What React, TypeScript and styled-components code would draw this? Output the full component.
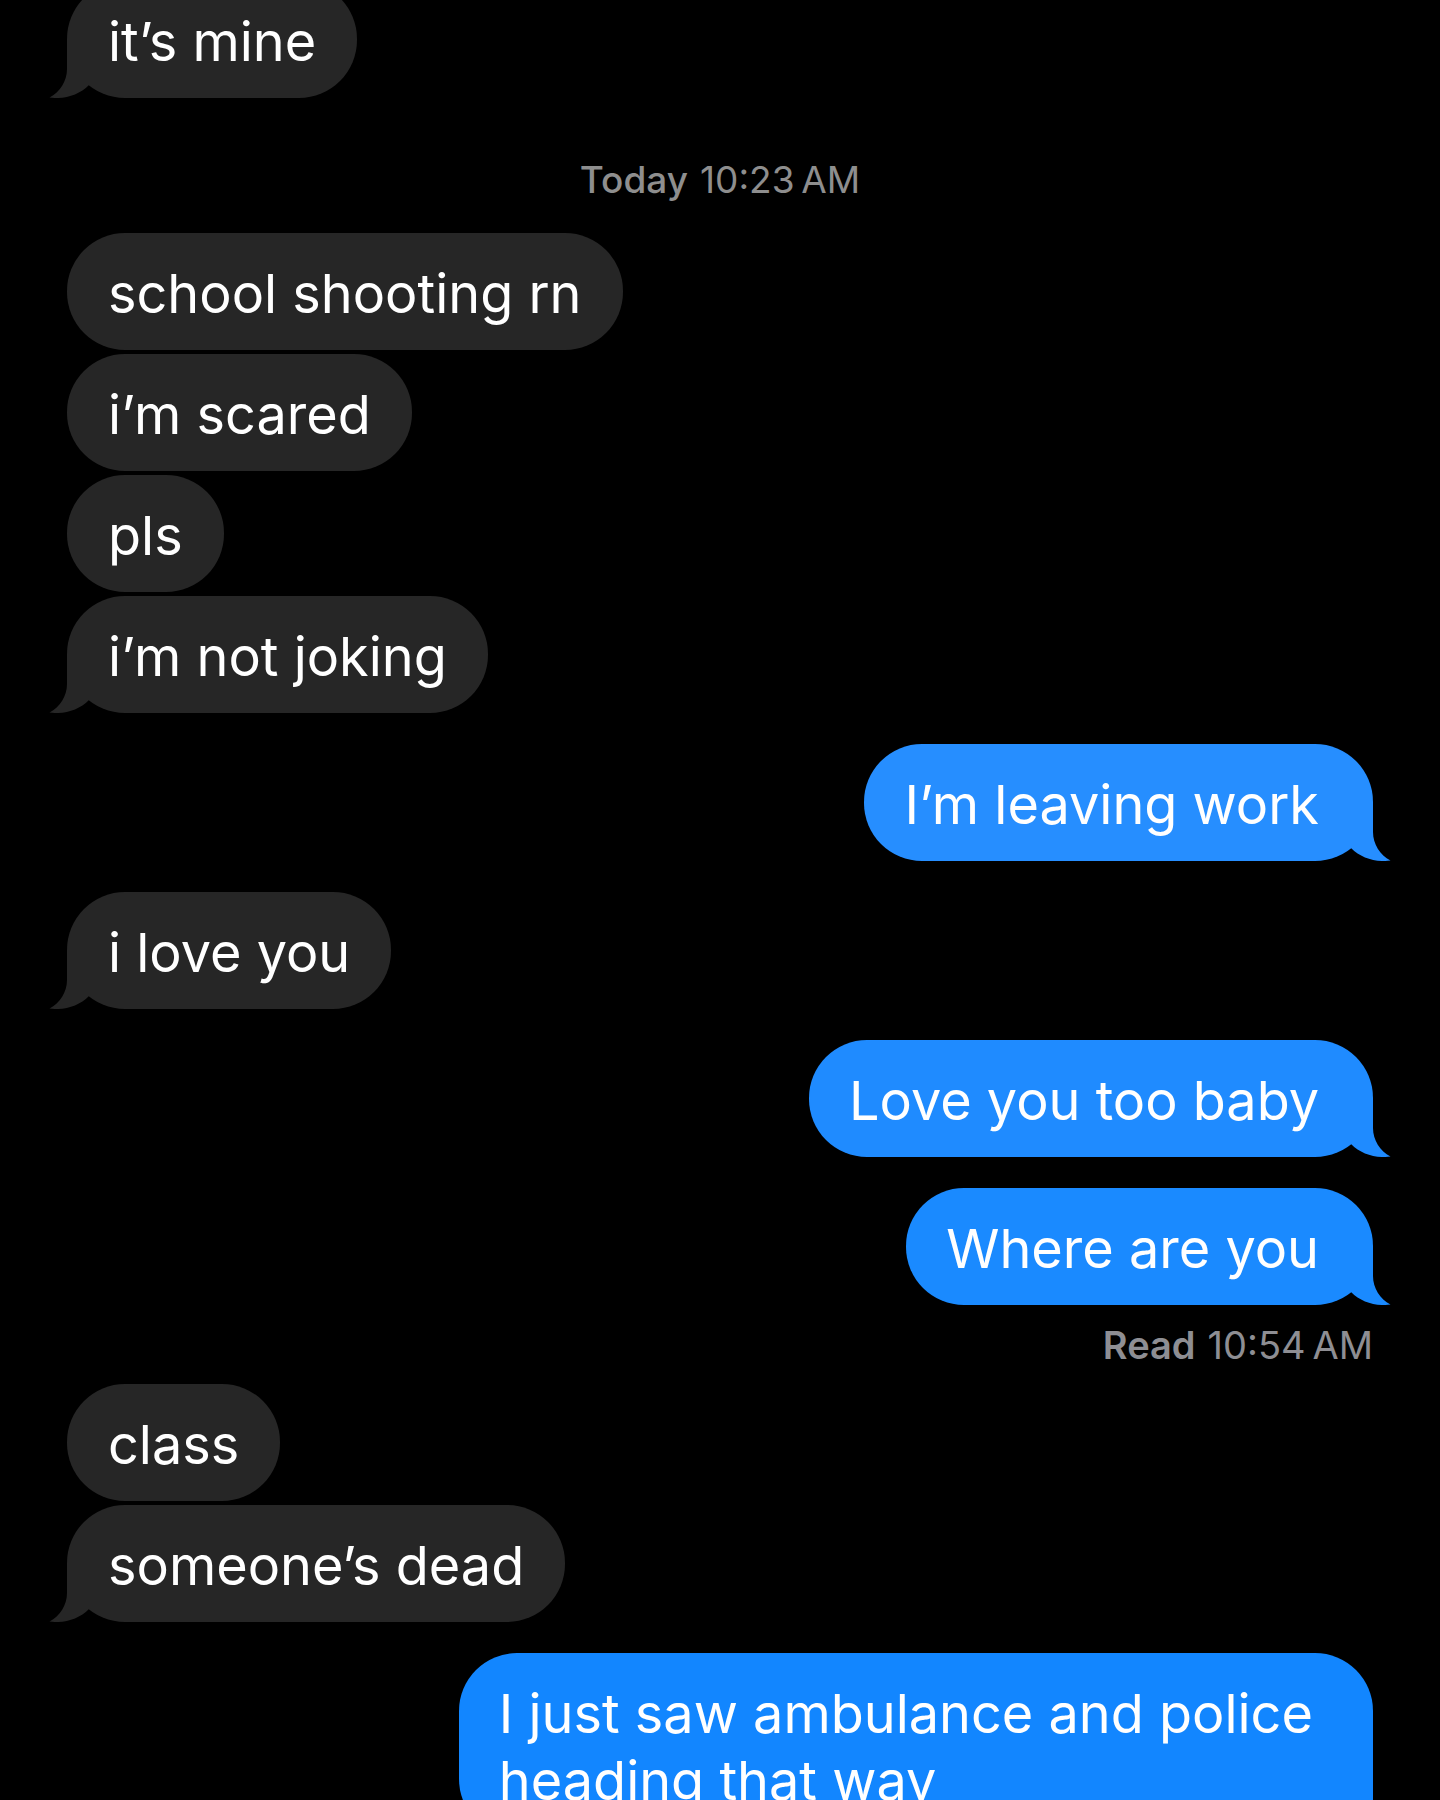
import React from "react";
import styled, { createGlobalStyle } from "styled-components";

type Side = "received" | "sent";

type Message = { text: string; tail?: boolean };

type Entry =
  | { kind: "messages"; side: Side; tint: string; items: Message[] }
  | { kind: "divider"; label: string; time: string }
  | { kind: "receipt"; label: string; time: string };

const GREY = "#262626";

const conversation: Entry[] = [
  { kind: "messages", side: "received", tint: GREY, items: [{ text: "it’s mine", tail: true }] },
  { kind: "divider", label: "Today", time: "10:23\u202fAM" },
  {
    kind: "messages",
    side: "received",
    tint: GREY,
    items: [
      { text: "school shooting rn" },
      { text: "i’m scared" },
      { text: "pls" },
      { text: "i’m not joking", tail: true },
    ],
  },
  { kind: "messages", side: "sent", tint: "#268eff", items: [{ text: "I’m leaving work", tail: true }] },
  { kind: "messages", side: "received", tint: GREY, items: [{ text: "i love you", tail: true }] },
  { kind: "messages", side: "sent", tint: "#1f8bff", items: [{ text: "Love you too baby", tail: true }] },
  { kind: "messages", side: "sent", tint: "#1a8aff", items: [{ text: "Where are you", tail: true }] },
  { kind: "receipt", label: "Read", time: "10:54\u202fAM" },
  {
    kind: "messages",
    side: "received",
    tint: GREY,
    items: [{ text: "class" }, { text: "someone’s dead", tail: true }],
  },
  {
    kind: "messages",
    side: "sent",
    tint: "#1286ff",
    items: [{ text: "I just saw ambulance and police heading that way", tail: true }],
  },
];

const GlobalStyle = createGlobalStyle`
  *, *::before, *::after {
    box-sizing: border-box;
  }

  body {
    margin: 0;
    background: #000;
    font-family: Inter, "Liberation Sans", sans-serif;
  }
`;

const Screen = styled.main`
  height: 100vh;
  overflow: hidden;
  background: #000;
`;

const Thread = styled.div`
  display: flex;
  flex-direction: column;
  margin-top: -19px;
  padding: 0 67px;
`;

const Group = styled.section<{ $side: Side }>`
  display: flex;
  flex-direction: column;
  align-items: ${({ $side }) => ($side === "sent" ? "flex-end" : "flex-start")};
  gap: 4px;

  & + & {
    margin-top: 31px;
  }
`;

const Bubble = styled.p<{ $side: Side; $tint: string }>`
  position: relative;
  max-width: 70%;
  margin: 0;
  padding: 27px ${({ $side }) => ($side === "sent" ? "54px 23px 40px" : "41px 23px 41px")};
  border-radius: 58px;
  background: ${({ $tint }) => $tint};
  color: #fff;
  font-size: 54px;
  font-weight: 400;
  line-height: 67px;
`;

const TailShape = styled.svg<{ $side: Side }>`
  position: absolute;
  bottom: 0;
  ${({ $side }) => ($side === "sent" ? "right: -18px; transform: scaleX(-1);" : "left: -18px;")}
  width: 40px;
  height: 60px;
`;

const Divider = styled.div`
  display: flex;
  justify-content: center;
  align-items: center;
  height: 135px;
  padding-top: 28px;
  color: #8e8e8e;
  font-size: 37px;
  line-height: 44px;
  white-space: pre;
`;

const Receipt = styled.div`
  display: flex;
  justify-content: flex-end;
  align-items: center;
  height: 79px;
  color: #8e8e93;
  font-size: 38px;
  line-height: 44px;
  white-space: pre;
`;

const Label = styled.span<{ $weight: number }>`
  margin-right: 12px;
  font-weight: ${({ $weight }) => $weight};
`;

function Tail({ side, tint }: { side: Side; tint: string }) {
  return (
    <TailShape $side={side} viewBox="0 0 40 60" aria-hidden="true">
      <path d="M18 1V31C18 43 11 54 0.5 59.6C16 61.5 30 57 40 47V1Z" fill={tint} />
    </TailShape>
  );
}

export default function App() {
  return (
    <>
      <GlobalStyle />
      <Screen>
        <Thread>
          {conversation.map((entry, i) => {
            if (entry.kind === "divider") {
              return (
                <Divider key={i}>
                  <Label $weight={500}>{entry.label}</Label>
                  <time>{entry.time}</time>
                </Divider>
              );
            }
            if (entry.kind === "receipt") {
              return (
                <Receipt key={i}>
                  <Label $weight={600}>{entry.label}</Label>
                  <time>{entry.time}</time>
                </Receipt>
              );
            }
            return (
              <Group key={i} $side={entry.side}>
                {entry.items.map((message) => (
                  <Bubble key={message.text} $side={entry.side} $tint={entry.tint}>
                    {message.tail && <Tail side={entry.side} tint={entry.tint} />}
                    {message.text}
                  </Bubble>
                ))}
              </Group>
            );
          })}
        </Thread>
      </Screen>
    </>
  );
}
